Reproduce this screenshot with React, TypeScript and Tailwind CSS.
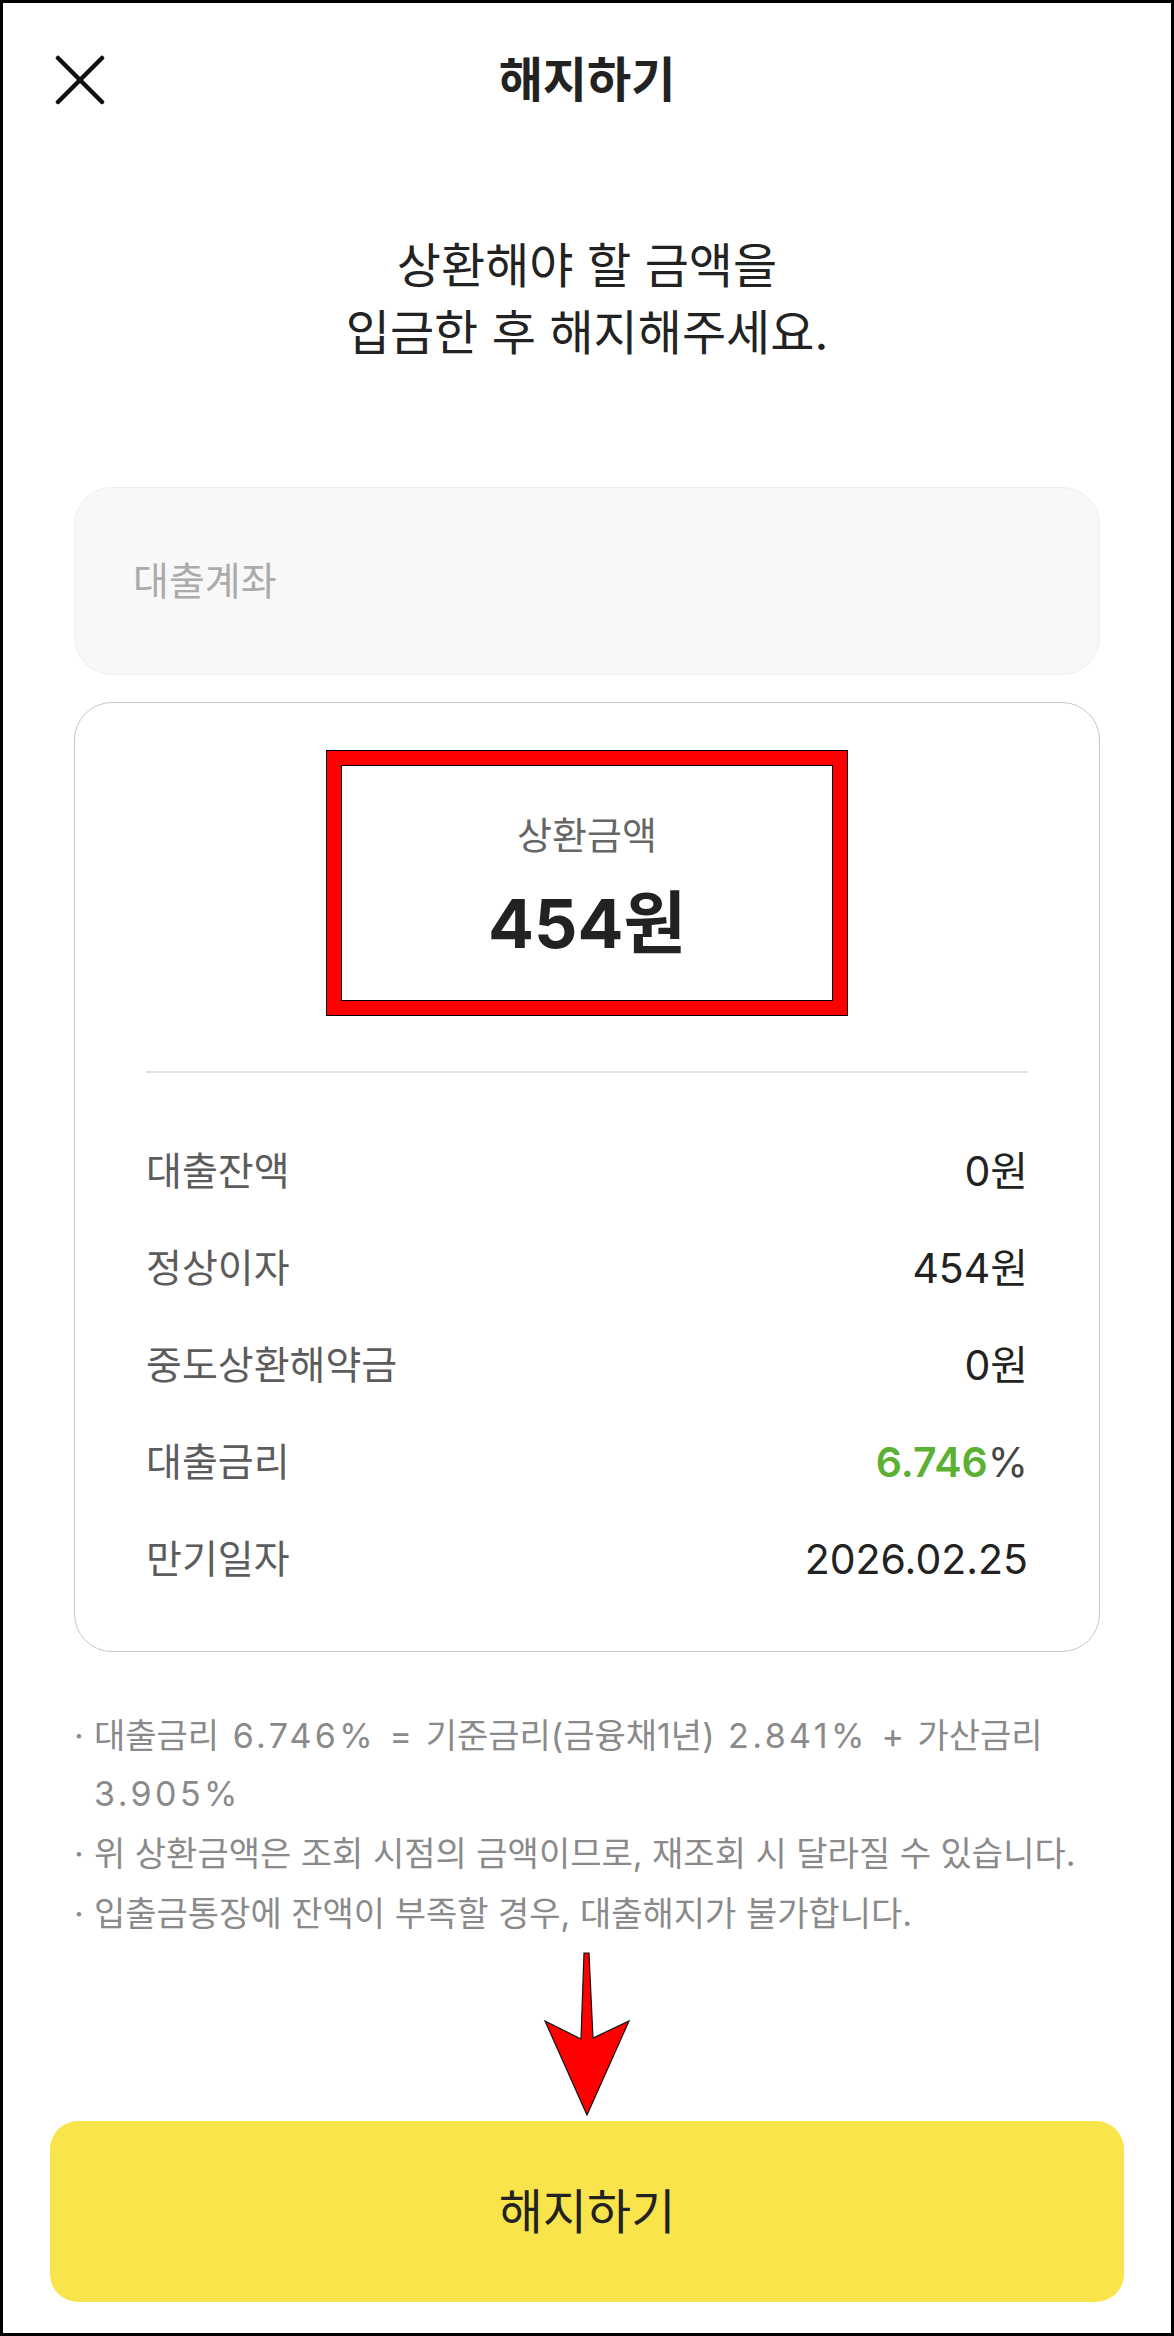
const rows = [
  { label: "대출잔액", value: "0원" },
  { label: "정상이자", value: "454원" },
  { label: "중도상환해약금", value: "0원" },
  { label: "대출금리", value: "rate" },
  { label: "만기일자", value: "2026.02.25" },
];

function CloseIcon() {
  return (
    <svg width="50" height="50" viewBox="0 0 50 50" fill="none">
      <path d="M3 3L47 47M47 3L3 47" stroke="#111" strokeWidth="4.5" strokeLinecap="round" />
    </svg>
  );
}

export default function App() {
  return (
    <div className="relative flex h-[2336px] w-[1174px] flex-col overflow-hidden border-[3px] border-black bg-white font-[Inter,'Noto_Sans_CJK_KR',sans-serif] text-[#222]">
      {/* Header */}
      <header className="grid h-[154px] grid-cols-[1fr_auto_1fr] items-center px-[52px]">
        <button className="flex h-[50px] w-[50px] items-center justify-center">
          <CloseIcon />
        </button>
        <h1 className="text-[48px] font-bold leading-none text-[#222]">해지하기</h1>
        <div />
      </header>

      <p className="mt-[75px] text-center text-[48px] leading-[67px] text-[#222]">
        상환해야 할 금액을
        <br />
        입금한 후 해지해주세요.
      </p>

      {/* Account field */}
      <div className="mx-[71px] mt-[121px] flex h-[188px] items-center rounded-[38px] border-[1.5px] border-[#eeeeee] bg-[#f8f8f8] pl-[58px] text-[39px] text-[#ababab]">
        대출계좌
      </div>

      {/* Summary card */}
      <div className="mx-[71px] mt-[27px] flex h-[950px] flex-col items-center rounded-[38px] border-[1.5px] border-[#c6c6c6] px-[71px] pt-[48px]">
        <div className="flex h-[264px] w-[520px] flex-col items-center justify-center border-[14px] border-[#ff0000] pt-[10px] shadow-[inset_0_0_0_1px_#000] outline-1 outline-black">
          <div className="text-[38px] leading-[44px] text-[#666]">상환금액</div>
          <div className="mt-[26px] text-[68px] font-bold leading-[80px] text-[#222]">454원</div>
        </div>

        <div className="mt-[56px] h-[2px] w-full bg-[#e2e2e2]" />

        <div className="mt-[50px] w-full">
          {rows.map((row) => (
            <div key={row.label} className="flex h-[97px] items-center justify-between">
              <span className="text-[39px] text-[#5c5c5c]">{row.label}</span>
              {row.value === "rate" ? (
                <span className="text-[41px]">
                  <span className="font-semibold text-[#5cb132]">6.746</span>
                  <span className="text-[#444]">%</span>
                </span>
              ) : (
                <span className="text-[41px] text-[#222]">{row.value}</span>
              )}
            </div>
          ))}
        </div>
      </div>

      {/* Notes */}
      <ul className="ml-[71px] mr-[20px] mt-[55px] flex flex-col gap-[2px] text-[34px] leading-[58px] text-[#8a8a8a]">
        <li className="flex">
          <span className="w-[20px] shrink-0">·</span>
          <span className="whitespace-nowrap [word-spacing:4px]">
            대출금리 <span className="tracking-[0.1em]">6.746%</span> = 기준금리(금융채1년){" "}
            <span className="tracking-[0.1em]">2.841%</span> + 가산금리
            <br />
            <span className="tracking-[0.1em]">3.905%</span>
          </span>
        </li>
        <li className="flex">
          <span className="w-[20px] shrink-0">·</span>
          <span className="whitespace-nowrap">위 상환금액은 조회 시점의 금액이므로, 재조회 시 달라질 수 있습니다.</span>
        </li>
        <li className="flex">
          <span className="w-[20px] shrink-0">·</span>
          <span>입출금통장에 잔액이 부족할 경우, 대출해지가 불가합니다.</span>
        </li>
      </ul>

      {/* Primary button */}
      <button className="mx-[47px] mb-[31px] mt-auto flex h-[181px] items-center justify-center rounded-[28px] bg-[#f9e44c] text-[48px] text-[#222]">
        해지하기
      </button>

      {/* Annotation arrow */}
      <svg
        className="absolute left-[537px] top-[1942px]"
        width="94"
        height="175"
        viewBox="0 0 94 175"
      >
        <path
          d="M44 8L49 8L53 93L89 76L47 170L5 76L41 94Z"
          fill="#ff0000"
          stroke="#111"
          strokeWidth="1.2"
          strokeLinejoin="miter"
        />
      </svg>
    </div>
  );
}
